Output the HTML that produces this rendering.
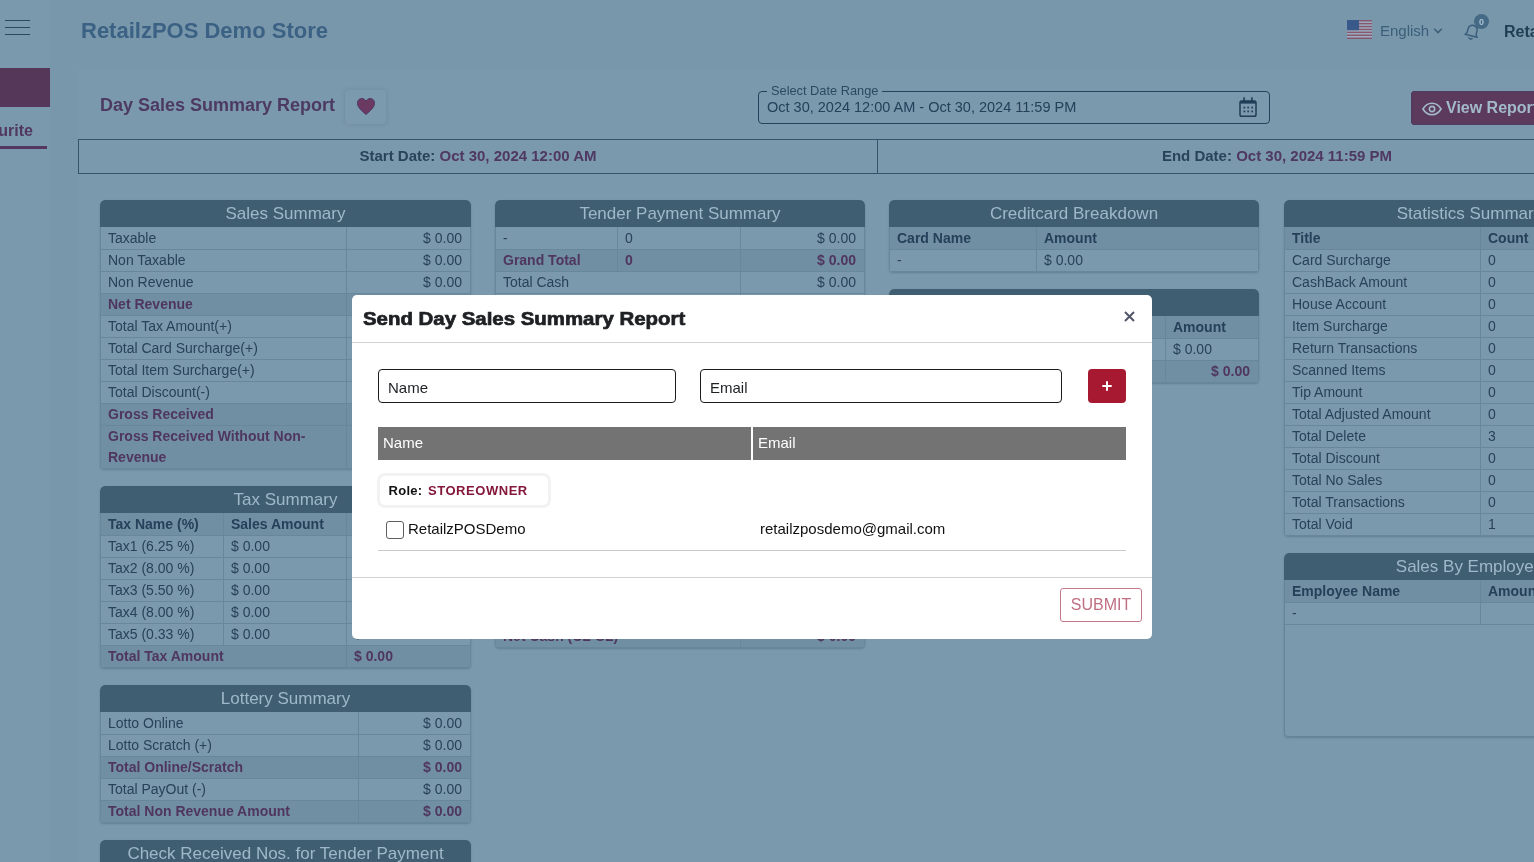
<!DOCTYPE html>
<html lang="en">
<head>
<meta charset="utf-8">
<title>RetailzPOS Demo Store - Day Sales Summary Report</title>
<style>
*{box-sizing:border-box}
html,body{margin:0;padding:0}
body{width:1534px;height:862px;overflow:hidden;position:relative;background:#7997aa;font-family:"Liberation Sans",Arial,Helvetica,sans-serif;font-size:14px;color:#27445a}
#root{position:absolute;left:0;top:0;width:1534px;height:862px;overflow:hidden;will-change:transform}
.abs{position:absolute}
/* sidebar */
#side{left:0;top:0;width:50px;height:862px;background:#7b99ac}
#side .ln{position:absolute;left:5px;width:25px;height:1px;background:#2a485e}
#side .act{position:absolute;left:0;top:68px;width:50px;height:39px;background:#55375a}
#side .fav{position:absolute;right:17px;top:121px;font-size:16px;font-weight:bold;color:#503860;white-space:nowrap;line-height:20px}
#side .ul{position:absolute;left:0;top:146px;width:47px;height:3px;background:#553862}
/* top */
#store{left:81px;top:17px;font-size:22px;font-weight:bold;color:#3b6184;line-height:28px;white-space:nowrap}
#lang{left:1380px;top:21px;font-size:15px;color:#3a5f7c;line-height:20px;white-space:nowrap}
#user{left:1504px;top:21px;font-size:16px;font-weight:bold;color:#1f3d53;line-height:22px;white-space:nowrap}
/* content card */
#content{left:78px;top:70px;width:1500px;height:800px;background:#7b99ac}
#ptitle{left:100px;top:93px;font-size:18px;font-weight:bold;color:#4d3a63;line-height:24px;white-space:nowrap}
#heart{left:345px;top:90px;width:41px;height:34px;border-radius:4px;background:#7c9aad;box-shadow:0 0 4px rgba(40,70,95,.18)}
#range{left:758px;top:91px;width:512px;height:33px;border:1px solid #24425b;border-radius:4px}
#range .lg{position:absolute;left:8px;top:-9px;padding:0 4px;background:#7b99ac;font-size:12.8px;line-height:15px;color:#2b4a61;white-space:nowrap}
#range .val{position:absolute;left:8px;top:6px;font-size:14.5px;line-height:18px;color:#23415a;white-space:nowrap}
#view{left:1411px;top:91px;width:140px;height:34px;border-radius:4px;background:#5c3a5e;box-shadow:inset 0 0 0 1px #4c3a60;color:#a3bacb;font-size:16px;font-weight:bold;line-height:34px;white-space:nowrap}
#dates{left:78px;top:139px;width:1600px;height:35px;border:1px solid #35546b;}
#dates .c{position:absolute;top:-1px;height:33px;line-height:33px;font-size:15px;font-weight:bold;color:#27445a;text-align:center;white-space:nowrap}
#dates .c b{color:#4f3862}
/* cards */
.card{position:absolute;width:371px;border-radius:5px 5px 4px 4px;box-shadow:0 1px 2px rgba(40,70,95,.3);overflow:hidden}
.card h3{margin:0;height:27px;line-height:27px;font-size:17px;font-weight:normal;text-align:center;color:#9fb8c9;background:#405e72;border-radius:5px 5px 0 0;white-space:nowrap;overflow:hidden}
.card table{width:371px;border-collapse:collapse;table-layout:fixed}
.card td,.card th{height:22px;padding:0 8px 0 7px;border:1px solid #69879c;border-top:0;font-size:14px;line-height:21px;text-align:left;vertical-align:middle;color:#27425a;font-weight:normal;overflow:hidden;white-space:nowrap}
.card th{font-weight:bold;background:#718fa2;color:#24405a}
.card td.r,.card th.r{text-align:right;padding-right:8px}
.card tr:first-child td,.card tr:first-child th{padding-top:1px}
.card tr.b td{font-weight:bold;color:#4f3660;background:#718fa2}
.card td.wrap{white-space:normal}

/* modal */
#modal{left:352px;top:295px;width:800px;height:344px;background:#fff;border-radius:5px;color:#111}
#mtitle{position:absolute;left:10.500px;top:11px;font-size:18px;font-weight:bold;line-height:26px;color:#1e2023;white-space:nowrap;transform-origin:0 50%;transform:scaleX(1.134);-webkit-text-stroke:.7px #1e2023}
#modal .hl{position:absolute;left:0;width:800px;height:1px;background:#d2d2d2}
#modal .inp{position:absolute;top:74px;height:34px;border:1px solid #1c1c1c;border-radius:4px;font-size:15px;line-height:35px;padding-left:9px;color:#1e2023;background:#fff}
#plus{position:absolute;left:736px;top:74px;width:38px;height:34px;border-radius:4px;background:#a71930}
#modal .th{position:absolute;top:132px;height:33px;background:#737373;color:#fff;font-size:15px;line-height:31px;padding-left:5px}
#role{position:absolute;left:25px;top:178px;width:174px;height:35px;border:3px solid #f2f2f2;border-radius:8px;font-size:13px;font-weight:bold;line-height:29px;padding-left:8.500px;color:#111;white-space:nowrap;letter-spacing:.3px}
#role b{color:#84173a;letter-spacing:.55px;margin-left:1.500px}
#cb{position:absolute;left:34px;top:226px;width:18px;height:18px;border:1px solid #5f5f5f;border-radius:3px;background:#fff}
#modal .t15{position:absolute;font-size:15px;line-height:20px;color:#111;white-space:nowrap}
#submit{position:absolute;left:708px;top:293px;width:82px;height:34px;border:1px solid #c5798a;border-radius:3px;color:#bf6f82;font-size:16px;line-height:32px;text-align:center}
</style>
</head>
<body>
<div id="root">
<div id="side" class="abs">
  <div class="ln" style="top:20px"></div><div class="ln" style="top:27px"></div><div class="ln" style="top:34px"></div>
  <div class="act"></div>
  <div class="fav">Favourite</div>
  <div class="ul"></div>
</div>
<div id="store" class="abs">RetailzPOS Demo Store</div>
<div id="content" class="abs"></div>
<!-- top bar -->
<svg class="abs" style="left:1347px;top:20px" width="25" height="19" viewBox="0 0 25 19">
  <rect width="25" height="19" fill="#9cb2c4"/>
  <g fill="#87566f">
    <rect y="0" width="25" height="1.5"/><rect y="2.9" width="25" height="1.5"/><rect y="5.8" width="25" height="1.5"/><rect y="8.7" width="25" height="1.5"/><rect y="11.6" width="25" height="1.5"/><rect y="14.5" width="25" height="1.5"/><rect y="17.5" width="25" height="1.5"/>
  </g>
  <rect width="12" height="10.2" fill="#38598a"/>
</svg>
<div id="lang" class="abs">English</div>
<svg class="abs" style="left:1433px;top:27px" width="10" height="8" viewBox="0 0 10 8"><path d="M1.2 1.8 L5 5.6 L8.8 1.8" fill="none" stroke="#3a5f7c" stroke-width="1.5"/></svg>
<svg class="abs" style="left:1462px;top:22px" width="20" height="20" viewBox="0 0 20 20">
  <g transform="rotate(14 10 10)"><path d="M10 3.2c-2.9 0-4.6 2.2-4.6 5v3.4l-1.6 2.3h12.4l-1.6-2.3V8.200000000000001c0-2.8-1.7-5-4.6-5z" fill="none" stroke="#3a5f7c" stroke-width="1.5" stroke-linejoin="round"/><path d="M8.3 16.2c.4.7 1 1 1.700 1s1.300-.3 1.700-1" fill="none" stroke="#3a5f7c" stroke-width="1.4" stroke-linecap="round"/></g>
</svg>
<div class="abs" style="left:1474px;top:14px;width:15px;height:15px;border-radius:50%;background:#456a86;color:#a9c0d0;font-size:9px;font-weight:bold;line-height:17px;text-align:center">0</div>
<div id="user" class="abs">RetailzPOS</div>

<div id="ptitle" class="abs">Day Sales Summary Report</div>
<div id="heart" class="abs"><svg style="position:absolute;left:12px;top:8px" width="18" height="17" viewBox="0 0 17 15" preserveAspectRatio="none"><path d="M8.500 14.600C4.800 11.500 0.400 8.400 0.400 4.600C0.400 2 2.300 0.400 4.500 0.400C6.200 0.400 7.700 1.300 8.500 2.900C9.300 1.300 10.800 0.400 12.500 0.400C14.700 0.400 16.600 2 16.600 4.600C16.600 8.400 12.200 11.500 8.500 14.600Z" fill="#6a3a62" stroke="#4c3660" stroke-width=".8"/></svg></div>
<div id="range" class="abs"><span class="lg">Select Date Range</span><span class="val">Oct 30, 2024 12:00 AM - Oct 30, 2024 11:59 PM</span>
<svg style="position:absolute;left:480px;top:5px" width="18" height="21" viewBox="0 0 18 21"><rect x="1" y="3.900" width="16" height="15.300" rx="1.800" fill="none" stroke="#203d56" stroke-width="1.500"/><rect x="1" y="3.900" width="16" height="2.700" fill="#203d56"/><rect x="4.300" y="0.300" width="1.600" height="4" fill="#203d56"/><rect x="12.100" y="0.300" width="1.600" height="4" fill="#203d56"/><g fill="#203d56"><rect x="4.500" y="9.700" width="1.700" height="1.700"/><rect x="8.300" y="9.700" width="1.700" height="1.700"/><rect x="12.300" y="9.700" width="1.700" height="1.700"/><rect x="4.500" y="13.600" width="1.700" height="1.700"/><rect x="8.300" y="13.600" width="1.700" height="1.700"/><rect x="12.300" y="13.600" width="1.700" height="1.700"/></g></svg>
</div>
<div id="view" class="abs"><svg style="position:absolute;left:11px;top:8.500px" width="20" height="18" viewBox="0 0 21 18"><path d="M1 9C3.500 4.800 6.800 3 10.500 3S17.500 4.800 20 9C17.500 13.200 14.200 15 10.500 15S3.500 13.200 1 9Z" fill="none" stroke="#a3bacb" stroke-width="1.700"/><circle cx="10.500" cy="9" r="2.800" fill="none" stroke="#a3bacb" stroke-width="1.700"/></svg><span style="position:absolute;left:35px;top:0">View Report</span></div>
<div id="dates" class="abs">
  <div class="c" style="left:0;width:798px">Start Date: <b>Oct 30, 2024 12:00 AM</b></div>
  <div style="position:absolute;left:798px;top:0;width:1px;height:33px;background:#35546b"></div>
  <div class="c" style="left:799px;width:798px">End Date: <b>Oct 30, 2024 11:59 PM</b></div>
</div>

<div class="card" style="left:100px;top:200px"><h3>Sales Summary</h3><table><colgroup><col style="width:246px"><col></colgroup><tr><td>Taxable</td><td class="r">$ 0.00</td></tr><tr><td>Non Taxable</td><td class="r">$ 0.00</td></tr><tr><td>Non Revenue</td><td class="r">$ 0.00</td></tr><tr class="b"><td>Net Revenue</td><td class="r">$ 0.00</td></tr><tr><td>Total Tax Amount(+)</td><td class="r">$ 0.00</td></tr><tr><td>Total Card Surcharge(+)</td><td class="r">$ 0.00</td></tr><tr><td>Total Item Surcharge(+)</td><td class="r">$ 0.00</td></tr><tr><td>Total Discount(-)</td><td class="r">$ 0.00</td></tr><tr class="b"><td>Gross Received</td><td class="r">$ 0.00</td></tr><tr class="b"><td class="wrap">Gross Received Without Non-Revenue</td><td class="r">$ 0.00</td></tr></table></div>
<div class="card" style="left:100px;top:486px"><h3>Tax Summary</h3><table><colgroup><col style="width:123px"><col style="width:123px"><col></colgroup><tr><th>Tax Name (%)</th><th>Sales Amount</th><th>Tax Amount</th></tr><tr><td>Tax1 (6.25 %)</td><td>$ 0.00</td><td>$ 0.00</td></tr><tr><td>Tax2 (8.00 %)</td><td>$ 0.00</td><td>$ 0.00</td></tr><tr><td>Tax3 (5.50 %)</td><td>$ 0.00</td><td>$ 0.00</td></tr><tr><td>Tax4 (8.00 %)</td><td>$ 0.00</td><td>$ 0.00</td></tr><tr><td>Tax5 (0.33 %)</td><td>$ 0.00</td><td>$ 0.00</td></tr><tr class="b"><td colspan="2">Total Tax Amount</td><td>$ 0.00</td></tr></table></div>
<div class="card" style="left:100px;top:685px"><h3>Lottery Summary</h3><table><colgroup><col style="width:258px"><col></colgroup><tr><td>Lotto Online</td><td class="r">$ 0.00</td></tr><tr><td>Lotto Scratch (+)</td><td class="r">$ 0.00</td></tr><tr class="b"><td>Total Online/Scratch</td><td class="r">$ 0.00</td></tr><tr><td>Total PayOut (-)</td><td class="r">$ 0.00</td></tr><tr class="b"><td>Total Non Revenue Amount</td><td class="r">$ 0.00</td></tr></table></div>
<div class="card" style="left:100px;top:840px"><h3>Check Received Nos. for Tender Payment</h3><table><tr><td>-</td></tr></table></div>
<div class="card" style="left:495px;top:200px;width:370px"><h3>Tender Payment Summary</h3><table style="width:370px"><colgroup><col style="width:122px"><col style="width:123px"><col></colgroup><tr><td>-</td><td>0</td><td class="r">$ 0.00</td></tr><tr class="b"><td>Grand Total</td><td>0</td><td class="r">$ 0.00</td></tr><tr><td colspan="2">Total Cash</td><td class="r">$ 0.00</td></tr><tr><td colspan="2">Total Cash Refund (-)</td><td class="r">$ 0.00</td></tr><tr><td colspan="2">Total Lottery PayOut (-)</td><td class="r">$ 0.00</td></tr><tr><td colspan="2">Total Vendor PayOut (-)</td><td class="r">$ 0.00</td></tr><tr><td colspan="2">Total Cash Back (-)</td><td class="r">$ 0.00</td></tr><tr><td colspan="2">Total Safe Drop (-)</td><td class="r">$ 0.00</td></tr><tr><td colspan="2">Total Loan (+)</td><td class="r">$ 0.00</td></tr><tr><td colspan="2">Cash In Drawer</td><td class="r">$ 0.00</td></tr><tr><td colspan="2">Opening Amount (OP)</td><td class="r">$ 0.00</td></tr><tr><td colspan="2">Cash Added (+)</td><td class="r">$ 0.00</td></tr><tr><td colspan="2">Cash Removed (-)</td><td class="r">$ 0.00</td></tr><tr><td colspan="2">Closing Amount (CL)</td><td class="r">$ 0.00</td></tr><tr><td colspan="2">Sales (SL)</td><td class="r">$ 0.00</td></tr><tr><td colspan="2">Cash Short/Over</td><td class="r">$ 0.00</td></tr><tr><td colspan="2">Total Check</td><td class="r">$ 0.00</td></tr><tr><td colspan="2">Total Other Tender</td><td class="r">$ 0.00</td></tr><tr class="b" style="height:24px"><td colspan="2" style="height:24px;padding-top:2px">Net Cash (CL-SL)</td><td class="r" style="height:24px;padding-top:2px">$ 0.00</td></tr></table></div>
<div class="card" style="left:889px;top:200px;width:370px"><h3>Creditcard Breakdown</h3><table style="width:370px"><colgroup><col style="width:147px"><col></colgroup><tr><th>Card Name</th><th>Amount</th></tr><tr><td>-</td><td>$ 0.00</td></tr></table></div>
<div class="card" style="left:889px;top:289px;width:370px"><h3>Department Sales</h3><table style="width:370px"><colgroup><col style="width:276px"><col></colgroup><tr><th>Department</th><th>Amount</th></tr><tr><td>-</td><td>$ 0.00</td></tr><tr class="b"><td>Total</td><td class="r">$ 0.00</td></tr></table></div>
<div class="card" style="left:1284px;top:200px"><h3>Statistics Summary</h3><table><colgroup><col style="width:196px"><col></colgroup><tr><th>Title</th><th>Count</th></tr><tr><td>Card Surcharge</td><td>0</td></tr><tr><td>CashBack Amount</td><td>0</td></tr><tr><td>House Account</td><td>0</td></tr><tr><td>Item Surcharge</td><td>0</td></tr><tr><td>Return Transactions</td><td>0</td></tr><tr><td>Scanned Items</td><td>0</td></tr><tr><td>Tip Amount</td><td>0</td></tr><tr><td>Total Adjusted Amount</td><td>0</td></tr><tr><td>Total Delete</td><td>3</td></tr><tr><td>Total Discount</td><td>0</td></tr><tr><td>Total No Sales</td><td>0</td></tr><tr><td>Total Transactions</td><td>0</td></tr><tr><td>Total Void</td><td>1</td></tr></table></div>
<div class="card" style="left:1284px;top:553px;height:184px;border:0"><h3>Sales By Employee</h3><table><colgroup><col style="width:196px"><col></colgroup><tr><th>Employee Name</th><th>Amount</th></tr><tr><td>-</td><td class="r">$ 0.00</td></tr></table><div style="position:absolute;left:0;top:27px;width:371px;height:157px;border:1px solid #668499;border-top:0;border-radius:0 0 4px 4px"></div></div>


<div id="modal" class="abs">
  <div id="mtitle">Send Day Sales Summary Report</div>
  <svg style="position:absolute;left:772px;top:16px" width="11" height="11" viewBox="0 0 11 11"><path d="M1 1L10 10M10 1L1 10" stroke="#515668" stroke-width="2" fill="none"/></svg>
  <div class="hl" style="top:47px"></div>
  <div class="inp" style="left:26px;width:298px">Name</div>
  <div class="inp" style="left:348px;width:362px">Email</div>
  <div id="plus"><svg style="position:absolute;left:14px;top:12px" width="10" height="10" viewBox="0 0 10 10"><path d="M5 0.300V9.700M0.300 5H9.700" stroke="#fff" stroke-width="2" fill="none"/></svg></div>
  <div class="th" style="left:26px;width:373px">Name</div>
  <div class="th" style="left:401px;width:373px">Email</div>
  <div id="role">Role: <b>STOREOWNER</b></div>
  <div id="cb"></div>
  <div class="t15" style="left:56px;top:224px">RetailzPOSDemo</div>
  <div class="t15" style="left:408px;top:224px">retailzposdemo@gmail.com</div>
  <div style="position:absolute;left:26px;top:255px;width:748px;height:1px;background:#c9c9c9"></div>
  <div class="hl" style="top:282px"></div>
  <div id="submit">SUBMIT</div>
</div>

</div>
</body>
</html>
